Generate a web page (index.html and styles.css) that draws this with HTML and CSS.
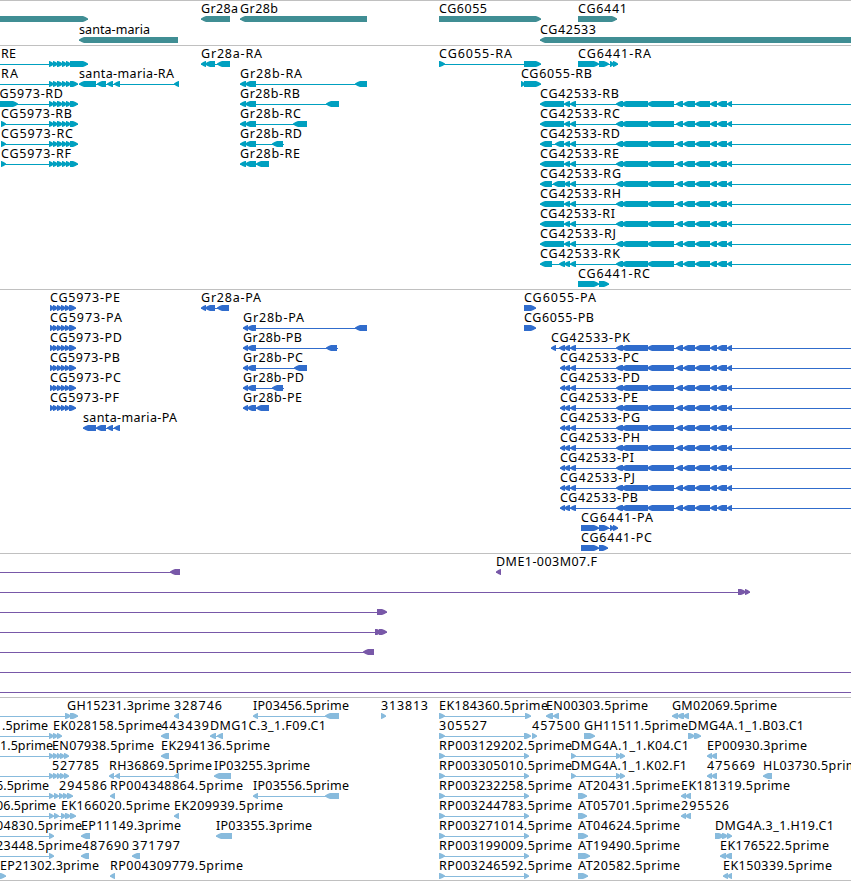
FILE: index.html
```html
<!DOCTYPE html>
<html lang="en">

<head>
  <meta charset="UTF-8" />
  <title>Genome tracks</title>
  <link rel="stylesheet" href="styles.css">
</head>

<body>
  <main class="browser">
    <svg class="track genes" id="genes"></svg>
    <svg class="track transcripts" id="transcripts"></svg>
    <svg class="track proteins" id="proteins"></svg>
    <svg class="track clones" id="clones"></svg>
    <svg class="track ests" id="ests"></svg>
  </main>
  <script src="tracks.js"></script>
</body>

</html>
```
FILE: styles.css
```css
body {
  margin: 0;
  background-color: #ffffff;
  overflow: hidden;
}

.browser {
  display: flex;
  flex-direction: column;
  width: 851px;
  border-bottom: 1px solid #c0c0c0;
}

.track {
  display: block;
  box-sizing: border-box;
  width: 100%;
  border-top: 1px solid #c0c0c0;
  overflow: hidden;
}

.track text {
  font-family: "Noto Sans", "Open Sans", sans-serif;
  font-size: 12.5px;
  fill: #000000;
}

.genes {
  height: 45px;
  fill: #408e94;
}

.transcripts {
  height: 244px;
  fill: #00a0c0;
}

.proteins {
  height: 264px;
  fill: #306ccc;
}

.clones {
  height: 144px;
  fill: #7858a8;
}

.ests {
  height: 183px;
  fill: #88bbdd;
}
```
FILE: tracks.js
```js
// Each feature: [row, label, x, label width, strand, exons, line end (optional)]
// exons are "start-end" pairs, a leading "<" means the feature starts off the left edge

const exons5973 = "49-54 53-58 57-63 62-67 66-71 70-78";
const cds5973 = "50-54 53-58 57-62 61-66 65-70 69-76";
const exons42533 = "616-623 621-648 647-674 676-683 683-695 695-710 710-717 717-727 727-732";

const genes = [
  [0, "", 0, 0, "+", "<0-88"],
  [0, "Gr28a", 201, 37, "-", "201-230"],
  [0, "Gr28b", 240, 38, "-", "240-367"],
  [0, "CG6055", 439, 48, "+", "439-541"],
  [0, "CG6441", 578, 49, "+", "578-617"],
  [1, "santa-maria", 79, 71, "-", "79-178"],
  [1, "CG42533", 540, 56, "-", "540-860"]
];

const transcripts = [
  [0, "RE", 1, 15, "+", "< 49-54 53-58 57-63 62-67 66-71 70-88"],
  [1, "RA", 1, 17, "+", "< " + exons5973],
  [2, "CG5973-RD", -9, 72, "+", "<0-18 " + exons5973],
  [3, "CG5973-RB", 1, 71, "+", "1-6 " + exons5973],
  [4, "CG5973-RC", 1, 72, "+", "1-6 " + exons5973],
  [5, "CG5973-RF", 1, 70, "+", "1-6 " + exons5973],
  [1, "santa-maria-RA", 79, 95, "-", "79-96 97-106 107-113 114-120 174-179"],
  [0, "Gr28a-RA", 201, 61, "-", "201-206 205-215 217-230"],
  [1, "Gr28b-RA", 240, 62, "-", "240-246 245-256 355-367"],
  [2, "Gr28b-RB", 240, 60, "-", "240-246 245-256 326-339"],
  [3, "Gr28b-RC", 240, 61, "-", "240-246 245-256 293-307"],
  [4, "Gr28b-RD", 240, 62, "-", "240-246 245-256 272-283", 284],
  [5, "Gr28b-RE", 240, 60, "-", "240-246 245-256 256-269"],
  [0, "CG6055-RA", 439, 73, "+", "439-445 524-541"],
  [1, "CG6055-RB", 521, 71, "+", "521-525 524-541"],
  [0, "CG6441-RA", 578, 73, "+", "578-599 599-609 610-614 613-618"],
  [11, "CG6441-RC", 578, 72, "+", "578-599 599-609"]
];

// CG42533 isoforms differ only at the 3' end
[
  ["RB", 79, "540-564"], ["RC", 80, "540-564"], ["RD", 80, "540-552 555-564"],
  ["RE", 79, "540-564"], ["RG", 81, "540-552 553-565"], ["RH", 81, "540-564"],
  ["RI", 75, "540-564"], ["RJ", 76, "540-564"], ["RK", 80, "540-552 559-565"]
].forEach(([name, width, start], i) => {
  transcripts.push([i + 2, "CG42533-" + name, 540, width, "-",
    start + " 564-570 570-576 " + exons42533, 860]);
});

const proteins = [
  [0, "Gr28a-PA", 201, 60, "-", "201-206 205-215 217-229"],
  [1, "Gr28b-PA", 243, 61, "-", "243-248 247-256 355-367"],
  [2, "Gr28b-PB", 243, 59, "-", "243-248 247-256 326-337", 338],
  [3, "Gr28b-PC", 243, 60, "-", "243-248 247-256 294-307"],
  [4, "Gr28b-PD", 243, 61, "-", "243-248 247-256 272-283", 284],
  [5, "Gr28b-PE", 243, 59, "-", "243-248 247-256 256-269"],
  [6, "santa-maria-PA", 83, 94, "-", "83-96 96-106 107-113 114-120"],
  [0, "CG6055-PA", 524, 72, "+", "524-536"],
  [1, "CG6055-PB", 524, 70, "+", "524-536"],
  [2, "CG42533-PK", 551, 79, "-", "551-556 559-565 564-570 570-576 " + exons42533, 860],
  [11, "CG6441-PA", 581, 72, "+", "581-599 599-609 610-614 613-618"],
  [12, "CG6441-PC", 581, 71, "+", "581-599 599-608"]
];

[["PE", 70], ["PA", 72], ["PD", 72], ["PB", 70], ["PC", 71], ["PF", 69]].forEach(([name, width], i) => {
  proteins.push([i, "CG5973-" + name, 50, width, "+", cds5973]);
});

[
  ["PC", 79], ["PD", 80], ["PE", 78], ["PG", 80],
  ["PH", 80], ["PI", 74], ["PJ", 75], ["PB", 78]
].forEach(([name, width], i) => {
  proteins.push([i + 3, "CG42533-" + name, 560, width, "-",
    "560-565 564-570 570-576 " + exons42533, 860]);
});

const clones = [
  [0, "", 0, 0, "-", "< 170-180"],
  [0, "DME1-003M07.F", 496, 101, "-", "496-501"],
  [1, "", 0, 0, "+", "< 738-746 745-750"],
  [2, "", 0, 0, "+", "< 377-387"],
  [3, "", 0, 0, "+", "< 375-382 379-387"],
  [4, "", 0, 0, "-", "< 363-374"],
  [5, "", 0, 0, "+", "<", 860],
  [6, "", 0, 0, "+", "<", 860]
];

const ests = [
  [0, "GH15231.3prime", 67, 103, "+", "< 65-71 70-78"],
  [0, "328746", 174, 48, "-", "174-179"],
  [0, "IP03456.5prime", 253, 96, "-", "253-258 325-339"],
  [0, "313813", 381, 47, "+", "381-386"],
  [0, "EK184360.5prime", 439, 109, "+", "439-445 525-531"],
  [0, "EN00303.5prime", 546, 102, "-", "546-553 553-559"],
  [0, "GM02069.5prime", 672, 105, "-", "672-678 677-684 683-689"],

  [1, ".5prime", 2, 46, "+", "< 49-54 53-58 57-62"],
  [1, "EK028158.5prime", 53, 109, "", ""],
  [1, "443439", 161, 48, "-", "161-169"],
  [1, "DMG1C.3_1.F09.C1", 210, 116, "-", "210-216 217-223"],
  [1, "305527", 439, 48, "+", "439-445 524-531"],
  [1, "457500", 532, 48, "+", "532-537"],
  [1, "GH11511.5prime", 584, 104, "+", "584-595"],
  [1, "DMG4A.1_1.B03.C1", 688, 116, "+", "688-695 694-701"],

  [2, "1.5prime", 0, 53, "+", "< 49-54 53-58 57-61 60-65 64-69"],
  [2, "EN07938.5prime", 52, 102, "", ""],
  [2, "EK294136.5prime", 161, 109, "-", "161-169"],
  [2, "RP003129202.5prime", 439, 133, "+", "439-445 524-529"],
  [2, "DMG4A.1_1.K04.C1", 571, 118, "+", "571-576 616-621 620-625"],
  [2, "EP00930.3prime", 707, 100, "-", "707-712 711-717"],

  [3, "527785", 52, 47, "+", "< 49-54 53-58 57-61 60-65 64-69"],
  [3, "RH36869.5prime", 109, 103, "-", "109-114 115-120 174-179"],
  [3, "IP03255.3prime", 214, 96, "-", "214-231"],
  [3, "RP003305010.5prime", 439, 133, "+", "439-445 524-529"],
  [3, "DMG4A.1_1.K02.F1", 571, 116, "+", "571-576 616-621 620-625"],
  [3, "475669", 707, 48, "-", "707-712 711-717"],
  [3, "HL03730.5prime", 763, 102, "-", "763-772"],

  [4, "6.5prime", -4, 53, "+", "< 49-54 54-59 59-64 63-68 67-73"],
  [4, "294586", 59, 48, "", ""],
  [4, "RP004348864.5prime", 110, 133, "-", "110-115"],
  [4, "IP03556.5prime", 253, 96, "-", "253-258 325-339"],
  [4, "RP003232258.5prime", 439, 133, "+", "439-445 524-529"],
  [4, "AT20431.5prime", 578, 102, "+", "578-587"],
  [4, "EK181319.5prime", 681, 109, "-", "681-686 685-691"],

  [5, "06.5prime", -4, 60, "+", "< 49-54 54-59 61-66 65-71 70-76"],
  [5, "EK166020.5prime", 61, 109, "", ""],
  [5, "EK209939.5prime", 174, 109, "-", "174-179"],
  [5, "RP003244783.5prime", 439, 133, "+", "439-445 524-529"],
  [5, "AT05701.5prime", 578, 102, "+", "578-587"],
  [5, "295526", 681, 48, "-", "681-686 685-691"],

  [6, "04830.5prime", -4, 86, "+", "< 49-54"],
  [6, "EP11149.3prime", 81, 100, "-", "81-90"],
  [6, "IP03355.3prime", 216, 96, "-", "216-232"],
  [6, "RP003271014.5prime", 439, 133, "+", "439-445 524-529"],
  [6, "AT04624.5prime", 578, 102, "+", "578-588"],
  [6, "DMG4A.3_1.H19.C1", 715, 119, "+", "715-724 722-728 727-732"],

  [7, "23448.5prime", -4, 86, "+", "< 49-54"],
  [7, "487690", 82, 47, "-", "81-89"],
  [7, "371797", 132, 48, "-", "132-140"],
  [7, "RP003199009.5prime", 439, 133, "+", "439-445 524-529"],
  [7, "AT19490.5prime", 578, 102, "+", "578-590"],
  [7, "EK176522.5prime", 720, 109, "-", "720-726 725-732"],

  [8, "EP21302.3prime", 0, 99, "+", "<0-6"],
  [8, "RP004309779.5prime", 110, 133, "-", "110-115"],
  [8, "RP003246592.5prime", 439, 133, "+", "439-445 524-529"],
  [8, "AT20582.5prime", 578, 102, "+", "578-588"],
  [8, "EK150339.5prime", 723, 109, "-", "723-728 727-732"]
];

function add(svg, tag, attrs) {
  const el = document.createElementNS("http://www.w3.org/2000/svg", tag);
  for (const key in attrs) {
    el.setAttribute(key, attrs[key]);
  }
  svg.appendChild(el);
  return el;
}

// Block with a pointed end, the point follows the strand
function arrow(start, end, top, strand) {
  const head = Math.min(5, end - start - 0.5);
  const tip = strand === "+" ? end : start;
  const neck = strand === "+" ? end - head : start + head;
  const back = strand === "+" ? start : end;
  const mid = (neck + tip) / 2;
  return `${back},${top} ${neck},${top} ${mid},${top + 0.9} ${tip},${top + 2.5} ` +
    `${tip},${top + 3.5} ${mid},${top + 5.1} ${neck},${top + 6} ${back},${top + 6}`;
}

function drawTrack(id, features, rowHeight) {
  const svg = document.getElementById(id);

  features.forEach(([row, label, x, width, strand, exons, lineEnd]) => {
    const top = row * rowHeight + 15;
    const offLeft = exons.startsWith("<");
    const blocks = exons.replace("<0", "-10").replace("<", "").trim().split(" ")
      .filter(Boolean)
      .map(block => block.match(/^(-?\d+)-(\d+)$/).slice(1).map(Number));

    if (blocks.length || lineEnd) {
      const from = offLeft ? 0 : blocks[0][0];
      const to = lineEnd || blocks[blocks.length - 1][1];
      add(svg, "rect", { x: from, y: top + 3, width: to - from, height: 1 });
    }

    blocks.forEach(([start, end]) => {
      add(svg, "polygon", { points: arrow(start, end, top, strand) });
    });

    if (label) {
      const text = add(svg, "text", { x: x, y: top - 3, textLength: width });
      text.textContent = label;
    }
  });
}

drawTrack("genes", genes, 21);
drawTrack("transcripts", transcripts, 20);
drawTrack("proteins", proteins, 20);
drawTrack("clones", clones, 20);
drawTrack("ests", ests, 20);
```
